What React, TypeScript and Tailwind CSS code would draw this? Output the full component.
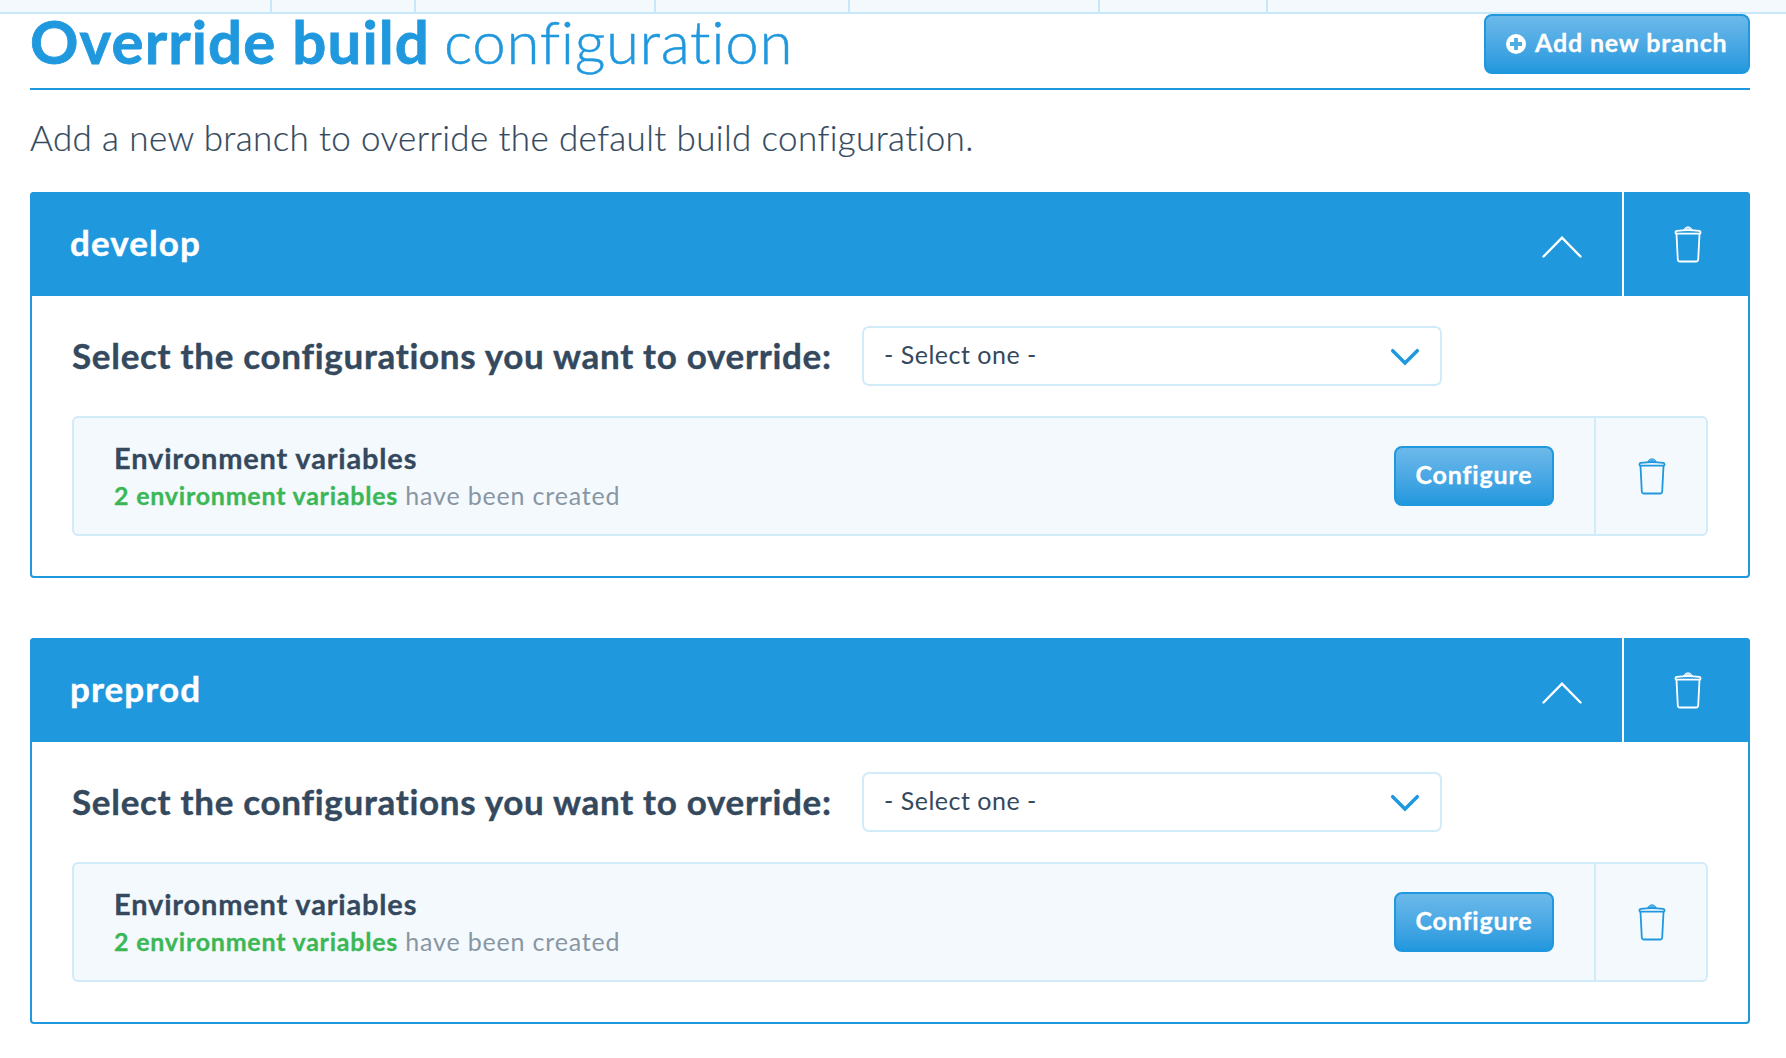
import React from 'react';

function TrashIcon({ className }: { className: string }) {
  return (
    <svg
      className={className}
      width="28"
      height="38"
      viewBox="0 0 28 38"
      fill="none"
      stroke="currentColor"
      strokeWidth="1.8"
      strokeLinejoin="round"
    >
      <path d="M9.8 5.2C10.6 2.6 12 1.9 14 1.9s3.4.7 4.2 3.3z" fill="currentColor" fillOpacity="0.75" strokeWidth="1" />
      <path d="M2.800 5.800C9 5 19 5 25.200 5.800c1.900 .3 1.800 2.900 0 2.900H2.800c-1.800 0-1.900-2.600 0-2.900z" />
      <path d="M2.500 9l1.300 25.500c.1 1.300.8 2 2.100 2h16.200c1.300 0 2-.7 2.100-2L25.500 9" />
    </svg>
  );
}

function Tabs() {
  return (
    <div className="flex h-[14px] border-b-2 border-[#c8e7f8] bg-[#f4f9fd]">
      <div className="w-[272px] border-r-2 border-[#c8e7f8]" />
      <div className="w-36 border-r-2 border-[#c8e7f8]" />
      <div className="w-60 border-r-2 border-[#c8e7f8]" />
      <div className="w-[194px] border-r-2 border-[#c8e7f8]" />
      <div className="w-[250px] border-r-2 border-[#c8e7f8]" />
      <div className="w-[168px] border-r-2 border-[#c8e7f8]" />
    </div>
  );
}

function BranchPanel({ name, count }: { name: string; count: number }) {
  return (
    <section className="h-[386px] rounded-[4px] border-2 border-[#2098de] bg-white">
      <header className="-mx-0.5 -mt-0.5 flex h-[104px] items-stretch rounded-t-[4px] bg-[#2098de] text-white">
        <h2 className="flex flex-1 items-center pb-[3px] pl-10 text-[35px] font-bold tracking-[1.08px] [-webkit-text-stroke:0.4px]">
          {name}
        </h2>
        <button className="flex items-center pr-10" aria-label="Collapse">
          <svg className="mt-[5px]" width="40" height="22" viewBox="0 0 40 22" fill="none" stroke="currentColor" strokeWidth="2.4" strokeLinecap="round">
            <path d="M1.500 20.500L20 1.700l18.500 18.800" />
          </svg>
        </button>
        <button className="flex w-32 items-center justify-center border-l-2 border-white pl-px" aria-label="Delete branch">
          <TrashIcon className="text-white" />
        </button>
      </header>
      <div className="px-10 pt-[30px]">
        <div className="flex h-[60px] items-center">
          <label className="w-[790px] whitespace-nowrap pb-[2px] text-[35px] font-bold tracking-[0.7px] [-webkit-text-stroke:0.4px]">
            Select the configurations you want to override:
          </label>
          <button className="flex h-[60px] w-[580px] items-center justify-between rounded-[7px] border-2 border-[#d2ebf9] pl-5 pr-5 text-[25px] tracking-[0.5px]">
            <span className="pb-[2px]">- Select one -</span>
            <svg className="mt-[2px]" width="30" height="18" viewBox="0 0 30 18" fill="none" stroke="#2098de" strokeWidth="3.500" strokeLinecap="round">
              <path d="M2.700 2.700L15 15 27.300 2.700" />
            </svg>
          </button>
        </div>
        <div className="mt-[30px] flex h-[120px] items-stretch rounded-[6px] border-2 border-[#d2ebf9] bg-[#f4f9fd]">
          <div className="flex-1 pl-10 pt-[21px]">
            <h3 className="h-[38px] text-[29px] font-bold leading-[38px] tracking-[0.82px] [-webkit-text-stroke:0.3px]">
              Environment variables
            </h3>
            <p className="h-[38px] text-[25px] leading-[36px] tracking-[0.82px] text-[#8996a3]">
              <span className="font-bold tracking-[0.77px] text-[#3bb755] [-webkit-text-stroke:0.3px]">{count} environment variables</span> have been created
            </p>
          </div>
          <div className="flex items-center pr-10">
            <button className="flex h-[60px] w-40 items-center justify-center rounded-lg border-2 border-[#2098de] bg-linear-to-b from-[#6bb9ea] to-[#2098de] pb-[2px] text-[25px] font-bold tracking-[0.84px] text-white [-webkit-text-stroke:0.3px]">
              Configure
            </button>
          </div>
          <button className="flex w-28 items-center justify-center border-l-2 border-[#d2ebf9] pl-px" aria-label="Delete override">
            <TrashIcon className="text-[#2098de]" />
          </button>
        </div>
      </div>
    </section>
  );
}

export default function App() {
  return (
    <div className="h-[1058px] w-full overflow-hidden bg-white font-['Lato',sans-serif] text-[#34495e]">
      <Tabs />
      <main className="pl-[30px] pr-9">
        <div className="flex h-[76px] items-start justify-between border-b-2 border-[#2098de] text-[#2098de]">
          <h1 className="h-[60px] whitespace-nowrap text-[60px] font-light leading-[54px] tracking-[0.63px] [-webkit-text-stroke:0.5px]">
            <span className="-mr-[3px] font-bold tracking-[1.15px] [-webkit-text-stroke:0.8px]">Override build</span> configuration
          </h1>
          <button className="flex h-[60px] w-[266px] items-center rounded-lg border-2 border-[#2098de] bg-linear-to-b from-[#6bb9ea] to-[#2098de] pl-5 text-[25px] font-bold tracking-[0.84px] text-white [-webkit-text-stroke:0.3px]">
            <svg className="mr-[9px]" width="20" height="20" viewBox="0 0 20 20">
              <circle cx="10" cy="10" r="10" fill="white" />
              <path d="M10 4v12M4 10h12" stroke="#4eace5" strokeWidth="3.800" strokeLinejoin="round" />
            </svg>
            <span className="pb-[2px]">Add new branch</span>
          </button>
        </div>
        <p className="mb-6 h-[78px] text-[35px] font-light leading-[95px] tracking-[0.37px] [-webkit-text-stroke:0.2px]">
          Add a new branch to override the default build configuration.
        </p>
        <div className="flex flex-col gap-[60px]">
          <BranchPanel name="develop" count={2} />
          <BranchPanel name="preprod" count={2} />
        </div>
      </main>
    </div>
  );
}
